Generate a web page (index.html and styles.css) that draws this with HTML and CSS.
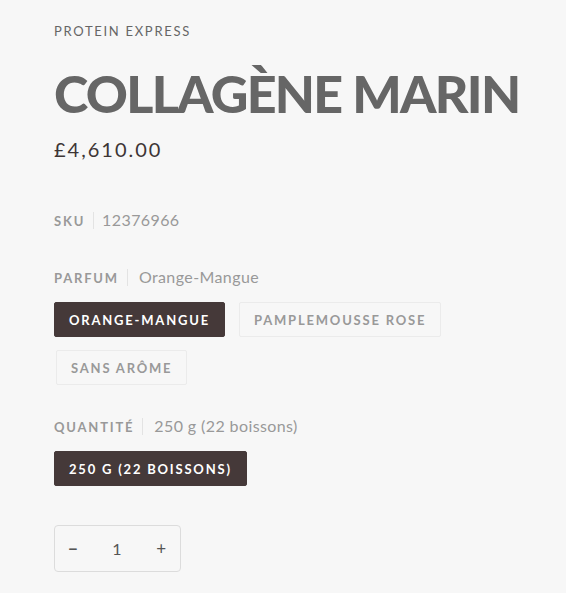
FILE: index.html
```html
<!DOCTYPE html>
<html lang="fr">
<head>
<meta charset="utf-8">
<link rel="stylesheet" href="styles.css">
</head>
<body>
<div class="page">
  <div class="brand">PROTEIN EXPRESS</div>
  <h1 class="title">COLLAGÈNE MARIN</h1>
  <div class="price">£4,610.00</div>

  <div class="meta sku"><span class="label">SKU</span><span class="sep"></span><span class="value">12376966</span></div>

  <div class="meta opt"><span class="label">PARFUM</span><span class="sep"></span><span class="value">Orange-Mangue</span></div>
  <div class="choices">
    <span class="pill active">ORANGE-MANGUE</span>
    <span class="pill">PAMPLEMOUSSE ROSE</span>
    <span class="pill shift">SANS ARÔME</span>
  </div>

  <div class="meta opt"><span class="label">QUANTITÉ</span><span class="sep"></span><span class="value">250 g (22 boissons)</span></div>
  <div class="choices">
    <span class="pill active">250 G (22 BOISSONS)</span>
  </div>

  <div class="qty">
    <span class="qbtn minus">−</span>
    <span class="qval">1</span>
    <span class="qbtn plus">+</span>
  </div>
</div>
</body>
</html>
```
FILE: styles.css
```css
* { box-sizing: border-box; }
html, body { margin: 0; padding: 0; background: #f7f7f7; }
body { font-family: "Lato", "Liberation Sans", sans-serif; color: #666; }
.page { padding: 21px 54px 0; }
.brand { font-size: 13px; line-height: 20px; letter-spacing: 1.7px; color: #666; }
.title {
  margin: 22px 0 0;
  font-family: "Lato", "Liberation Sans", sans-serif;
  font-weight: 900;
  font-size: 52px;
  line-height: 60px;
  letter-spacing: -1.7px;
  white-space: nowrap;
  color: #666;
}
.price { margin-top: 12px; font-size: 20px; line-height: 28px; letter-spacing: 2px; color: #3d3535; }
.meta { display: flex; align-items: baseline; height: 20px; line-height: 20px; }
.sku { margin-top: 47px; }
.opt { margin-top: 37px; }
.choices + .opt { margin-top: 31px; }
.label { font-size: 13px; font-weight: 700; letter-spacing: 1.8px; color: #999; }
.sep { width: 1px; height: 17px; background: #e3e3e3; margin: 0 8px; align-self: center; }
.opt .sep { margin: 0 11px 0 8px; }
.value { font-size: 16px; letter-spacing: 0.4px; color: #999; }
.choices { display: flex; flex-wrap: wrap; gap: 13px 14px; margin-top: 15px; }
.pill {
  display: inline-flex; align-items: center; height: 35px; padding: 0 14px;
  border: 1px solid #ebebeb; border-radius: 2px;
  font-size: 13px; font-weight: 700; letter-spacing: 1.8px; color: #999;
}
.pill.active { background: #453939; border-color: #453939; color: #fff; }
.pill.shift { margin-left: 2px; }
.qty {
  margin-top: 39px; width: 127px; height: 47px;
  border: 1px solid #dcdcdc; border-radius: 4px;
  display: flex; align-items: center; justify-content: space-between; padding: 0 14px 0 13px;
  color: #555; font-size: 16px;
}
.qbtn { font-size: 17px; }
.minus { font-weight: 700; }
```
